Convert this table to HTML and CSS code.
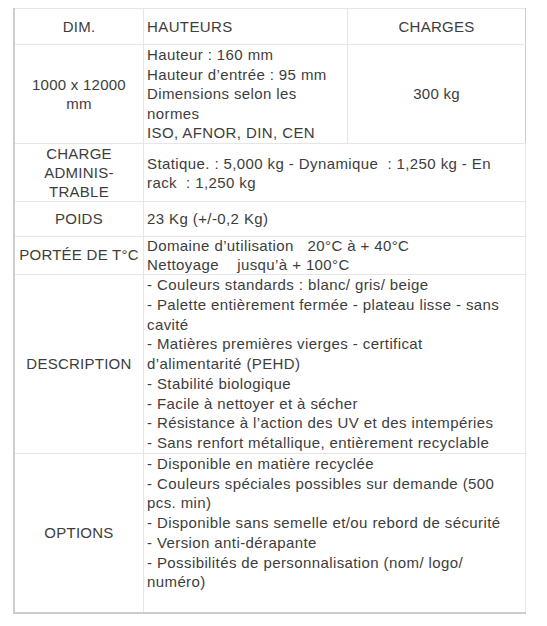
FILE: index.html
```html
<!DOCTYPE html>
<html lang="fr">
<head>
<meta charset="utf-8">
<title>Caractéristiques</title>
<link rel="stylesheet" href="styles.css">
</head>
<body>
<table class="spec">
  <tr class="r-head">
    <td class="label">DIM.</td>
    <td class="val">HAUTEURS</td>
    <td class="label">CHARGES</td>
  </tr>
  <tr class="r-dim">
    <td class="label">1000 x 12000<br>mm</td>
    <td class="val">Hauteur : 160 mm<br>Hauteur d’entrée : 95 mm<br>Dimensions selon les<br>normes<br>ISO, AFNOR, DIN, CEN</td>
    <td class="label">300 kg</td>
  </tr>
  <tr class="r-charge">
    <td class="label">CHARGE<br>ADMINIS-<br>TRABLE</td>
    <td class="val" colspan="2">Statique. : 5,000 kg - Dynamique&nbsp; : 1,250 kg - En<br>rack&nbsp; : 1,250 kg</td>
  </tr>
  <tr class="r-poids">
    <td class="label">POIDS</td>
    <td class="val" colspan="2">23 Kg (+/-0,2 Kg)</td>
  </tr>
  <tr class="r-temp">
    <td class="label">PORTÉE DE T°C</td>
    <td class="val" colspan="2">Domaine d’utilisation&nbsp;&nbsp; 20°C à + 40°C<br>Nettoyage&nbsp;&nbsp;&nbsp; jusqu’à + 100°C</td>
  </tr>
  <tr class="r-list">
    <td class="label">DESCRIPTION</td>
    <td class="val" colspan="2">- Couleurs standards : blanc/ gris/ beige<br>- Palette entièrement fermée - plateau lisse - sans<br>cavité<br>- Matières premières vierges - certificat<br>d’alimentarité (PEHD)<br>- Stabilité biologique<br>- Facile à nettoyer et à sécher<br>- Résistance à l’action des UV et des intempéries<br>- Sans renfort métallique, entièrement recyclable</td>
  </tr>
  <tr class="r-list">
    <td class="label">OPTIONS</td>
    <td class="val" colspan="2">- Disponible en matière recyclée<br>- Couleurs spéciales possibles sur demande (500<br>pcs. min)<br>- Disponible sans semelle et/ou rebord de sécurité<br>- Version anti-dérapante<br>- Possibilités de personnalisation (nom/ logo/<br>numéro)<br>&nbsp;</td>
  </tr>
</table>
</body>
</html>
```
FILE: styles.css
```css
html, body {
  margin: 0;
  padding: 0;
  background: #ffffff;
}

body {
  font-family: "Liberation Sans", Arial, Helvetica, sans-serif;
  font-size: 15px;
  color: #3d3d3d;
}

.spec {
  margin: 8px 0 0 13px;
  width: 513px;
  border-collapse: collapse;
  table-layout: fixed;
  border-top: 1px solid #dedede;
  border-left: 2px solid #cfcfcf;
  border-right: 1px solid #dcdcdc;
  border-bottom: 2px solid #cccccc;
}

.spec td {
  border: 1px solid #e6e6e6;
  padding: 0;
  vertical-align: middle;
  line-height: 19.5px;
  white-space: nowrap;
}

.spec td.label {
  text-align: center;
  letter-spacing: 0.25px;
}

.spec td.val {
  text-align: left;
  padding-left: 3px;
  letter-spacing: 0.4px;
}

.spec tr > td:first-child {
  width: 128px;
}

.r-head td:nth-child(2) {
  width: 200px;
}

.r-head td {
  height: 35px;
}

.r-dim td {
  height: 98px;
  line-height: 19.5px;
}

.r-dim td:last-child,
.r-head td:last-child {
  border-right: 1px solid #cdcdcd;
}

.r-charge td {
  height: 56px;
  line-height: 19px;
}

.r-poids td {
  height: 34px;
}

.r-temp td {
  height: 37px;
  line-height: 18.5px;
}

.r-list td {
  line-height: 19.75px;
}
```
